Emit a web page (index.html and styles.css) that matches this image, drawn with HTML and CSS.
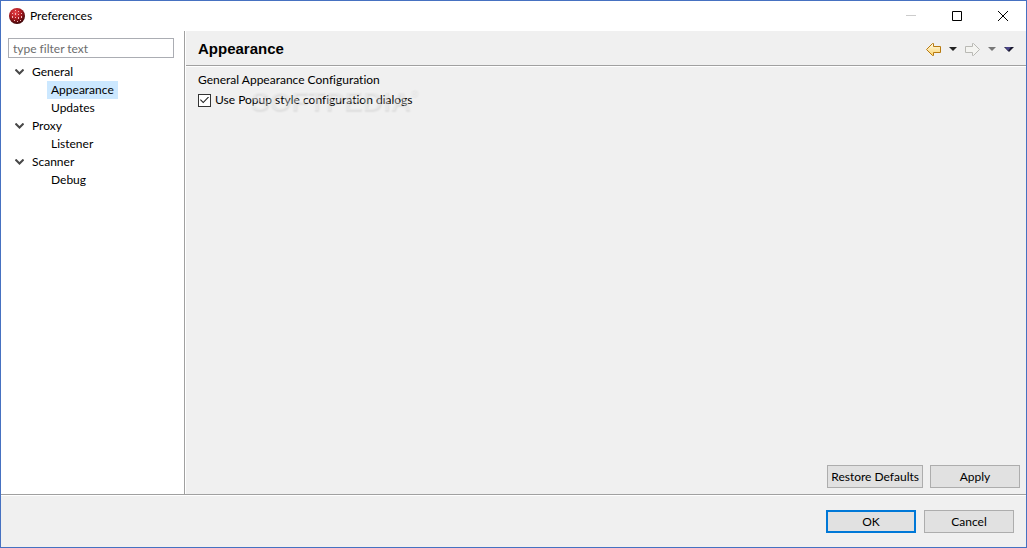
FILE: index.html
```html
<!DOCTYPE html>
<html lang="en">
<head>
    <meta charset="UTF-8">
    <title>Preferences</title>
    <link rel="stylesheet" href="styles.css">
</head>
<body>
    <div class="window">
        <header class="title-bar">
            <svg class="app-icon" width="16" height="16" viewBox="0 0 16 16">
                <defs>
                    <radialGradient id="ball" cx="40%" cy="30%" r="70%">
                        <stop offset="0" stop-color="#e8434a"/>
                        <stop offset="0.5" stop-color="#b01c22"/>
                        <stop offset="1" stop-color="#3c0608"/>
                    </radialGradient>
                </defs>
                <circle cx="8" cy="8" r="8" fill="url(#ball)"/>
                <g fill="#f3b9bb">
                    <rect x="6" y="2" width="1" height="1"/>
                    <rect x="9" y="3" width="1" height="1"/>
                    <rect x="3" y="5" width="1" height="1"/>
                    <rect x="6" y="5" width="1" height="2"/>
                    <rect x="9" y="6" width="1" height="1"/>
                    <rect x="12" y="5" width="1" height="1"/>
                    <rect x="3" y="8" width="1" height="2"/>
                    <rect x="6" y="9" width="1" height="1"/>
                    <rect x="9" y="9" width="1" height="2"/>
                    <rect x="12" y="8" width="1" height="2"/>
                    <rect x="5" y="12" width="1" height="1"/>
                    <rect x="8" y="13" width="1" height="1"/>
                    <rect x="11" y="12" width="1" height="1"/>
                </g>
            </svg>
            <h1>Preferences</h1>
            <div class="window-controls">
                <button type="button" aria-label="Minimize" disabled>
                    <svg width="10" height="10" viewBox="0 0 10 10"><path d="M0 4.5H10" stroke="#cccccc"/></svg>
                </button>
                <button type="button" aria-label="Maximize">
                    <svg width="10" height="10" viewBox="0 0 10 10"><path d="M.5 .5H9.5V9.5H.5Z" fill="none" stroke="#000"/></svg>
                </button>
                <button type="button" aria-label="Close">
                    <svg width="10" height="10" viewBox="0 0 10 10"><path d="M0 0L10 10M10 0L0 10" stroke="#000"/></svg>
                </button>
            </div>
        </header>

        <div class="main">
            <nav class="sidebar">
                <input class="filter" type="text" placeholder="type filter text" aria-label="Filter">
                <ul class="tree">
                    <li>
                        <button type="button" class="branch"><svg width="9" height="6" viewBox="0 0 9 6"><path d="M.5 .5L4.5 4.5L8.5 .5" fill="none" stroke="#484848" stroke-width="2"/></svg>General</button>
                        <ul>
                            <li><a class="active" href="#appearance">Appearance</a></li>
                            <li><a href="#updates">Updates</a></li>
                        </ul>
                    </li>
                    <li>
                        <button type="button" class="branch"><svg width="9" height="6" viewBox="0 0 9 6"><path d="M.5 .5L4.5 4.5L8.5 .5" fill="none" stroke="#484848" stroke-width="2"/></svg>Proxy</button>
                        <ul>
                            <li><a href="#listener">Listener</a></li>
                        </ul>
                    </li>
                    <li>
                        <button type="button" class="branch"><svg width="9" height="6" viewBox="0 0 9 6"><path d="M.5 .5L4.5 4.5L8.5 .5" fill="none" stroke="#484848" stroke-width="2"/></svg>Scanner</button>
                        <ul>
                            <li><a href="#debug">Debug</a></li>
                        </ul>
                    </li>
                </ul>
            </nav>

            <section class="page" id="appearance">
                <div class="page-header">
                    <h2>Appearance</h2>
                    <div class="history">
                        <button type="button" aria-label="Back">
                            <svg width="15" height="13" viewBox="0 0 15 13">
                                <defs><linearGradient id="gold" x2="0" y2="1"><stop offset="0" stop-color="#fffbe8"/><stop offset="1" stop-color="#fbd36b"/></linearGradient></defs>
                                <path d="M.5 6.5L6.5 .5H7.5V3.5H14.5V9.5H7.5V12.5H6.5Z" fill="url(#gold)" stroke="#b87a10" stroke-linejoin="round"/>
                            </svg>
                        </button>
                        <button type="button" aria-label="Back history">
                            <svg width="8" height="4" viewBox="0 0 8 4"><path d="M0 0H8L4 4Z" fill="#222"/></svg>
                        </button>
                        <button type="button" aria-label="Forward" disabled>
                            <svg width="15" height="13" viewBox="0 0 15 13">
                                <path d="M14.5 6.5L8.5 .5H7.5V3.5H.5V9.5H7.5V12.5H8.5Z" fill="#f4f4f1" stroke="#b9b9b4" stroke-linejoin="round"/>
                            </svg>
                        </button>
                        <button type="button" aria-label="Forward history" disabled>
                            <svg width="8" height="4" viewBox="0 0 8 4"><path d="M0 0H8L4 4Z" fill="#777"/></svg>
                        </button>
                        <button type="button" aria-label="Menu">
                            <svg width="10" height="5" viewBox="0 0 10 5"><path d="M0 0H10L5 5Z" fill="#17172a"/><path d="M1 0H7L4 4Z" fill="#4a4488"/></svg>
                        </button>
                    </div>
                </div>
                <div class="page-body">
                    <p>General Appearance Configuration</p>
                    <div class="option">
                        <input type="checkbox" id="popupStyle" checked>
                        <label for="popupStyle">Use Popup style configuration dialogs</label>
                        <span class="watermark">SOFTPEDIA<sup>®</sup></span>
                    </div>
                </div>
                <div class="page-actions">
                    <button type="button" class="button">Restore Defaults</button>
                    <button type="button" class="button">Apply</button>
                </div>
            </section>
        </div>

        <footer class="dialog-actions">
            <button type="button" class="button default">OK</button>
            <button type="button" class="button">Cancel</button>
        </footer>
    </div>
</body>
</html>
```

FILE: styles.css
```css
* {
    box-sizing: border-box;
}

body {
    margin: 0;
    color: #000;
    font-family: Lato, "Open Sans", sans-serif;
    font-size: 12px;
    font-variant-ligatures: none;
    line-height: 18px;
}

button,
input {
    font: inherit;
    color: inherit;
}

h1,
h2,
p,
ul {
    margin: 0;
    padding: 0;
}

ul {
    list-style: none;
}

svg {
    display: block;
}

.window {
    display: flex;
    flex-direction: column;
    min-height: 100vh;
    border: 1px solid #4671c1;
    background-color: #f0f0f0;
}

/* Title bar */
.title-bar {
    display: flex;
    align-items: center;
    height: 30px;
    padding-left: 8px;
    background-color: #fff;
}

.title-bar h1 {
    flex: 1;
    margin-left: 5px;
    font-size: 12px;
    font-weight: normal;
}

.window-controls {
    display: flex;
}

.window-controls button {
    display: flex;
    align-items: center;
    justify-content: center;
    width: 46px;
    height: 30px;
    padding: 0;
    border: none;
    background: none;
}

.main {
    display: flex;
    flex: 1;
}

/* Page tree */
.sidebar {
    width: 184px;
    padding: 7px 10px 0 7px;
    border-right: 1px solid #a0a0a0;
    background-color: #fff;
}

.filter {
    display: block;
    width: 100%;
    height: 20px;
    padding: 0 4px;
    border: 1px solid #abadb3;
    background-color: #fff;
}

.filter::placeholder {
    color: #6d6d6d;
    opacity: 1;
}

.tree {
    padding-top: 5px;
}

.branch {
    display: flex;
    align-items: center;
    gap: 8px;
    height: 18px;
    padding: 0 0 0 7px;
    border: none;
    background: none;
}

.tree a {
    display: block;
    width: fit-content;
    margin-left: 39px;
    padding: 0 4px;
    color: #000;
    text-decoration: none;
}

.tree a.active {
    background-color: #cce8ff;
}

/* Selected page */
.page {
    display: flex;
    flex: 1;
    flex-direction: column;
    border-left: 1px solid #fff;
}

.page-header {
    display: flex;
    align-items: center;
    justify-content: space-between;
    height: 35px;
    padding: 2px 12px 0;
    border-bottom: 1px solid #a0a0a0;
    box-shadow: 0 1px #fff;
}

.page-header h2 {
    font-family: "Liberation Sans", Arial, sans-serif;
    font-size: 15px;
}

.history {
    display: flex;
    align-items: center;
    gap: 8px;
}

.history button {
    padding: 0;
    border: none;
    background: none;
}

.page-body {
    flex: 1;
    padding: 5px 12px;
}

.option {
    position: relative;
    display: flex;
    align-items: center;
    gap: 4px;
    height: 22px;
}

.option input {
    appearance: none;
    display: grid;
    place-items: center;
    width: 13px;
    height: 13px;
    margin: 0;
    border: 1px solid #333;
    background-color: #fff;
}

.option input:checked::before {
    content: "";
    width: 9px;
    height: 7px;
    background-color: #222;
    clip-path: polygon(0 50%, 8% 38%, 36% 74%, 92% 0, 100% 10%, 36% 96%);
}

.watermark {
    position: absolute;
    left: 52px;
    top: 0;
    color: rgba(243, 243, 243, 0.4);
    font-family: "Liberation Sans", Arial, sans-serif;
    font-size: 28px;
    font-weight: bold;
    line-height: 24px;
    text-shadow: 1px 2px 2px rgba(0, 0, 0, 0.07);
    pointer-events: none;
}

.watermark sup {
    font-size: 10px;
    line-height: 0;
    vertical-align: 14px;
}

/* Buttons */
.button {
    min-width: 90px;
    height: 23px;
    padding: 0 3px;
    border: 1px solid #adadad;
    background-color: #e1e1e1;
    line-height: 21px;
}

.button.default {
    border: 2px solid #0078d7;
    line-height: 19px;
}

.page-actions {
    display: flex;
    justify-content: flex-end;
    gap: 7px;
    padding: 0 6px 6px;
}

.dialog-actions {
    display: flex;
    justify-content: flex-end;
    gap: 8px;
    padding: 15px 12px 14px;
    border-top: 1px solid #a0a0a0;
    box-shadow: inset 0 1px #fff;
}
```
